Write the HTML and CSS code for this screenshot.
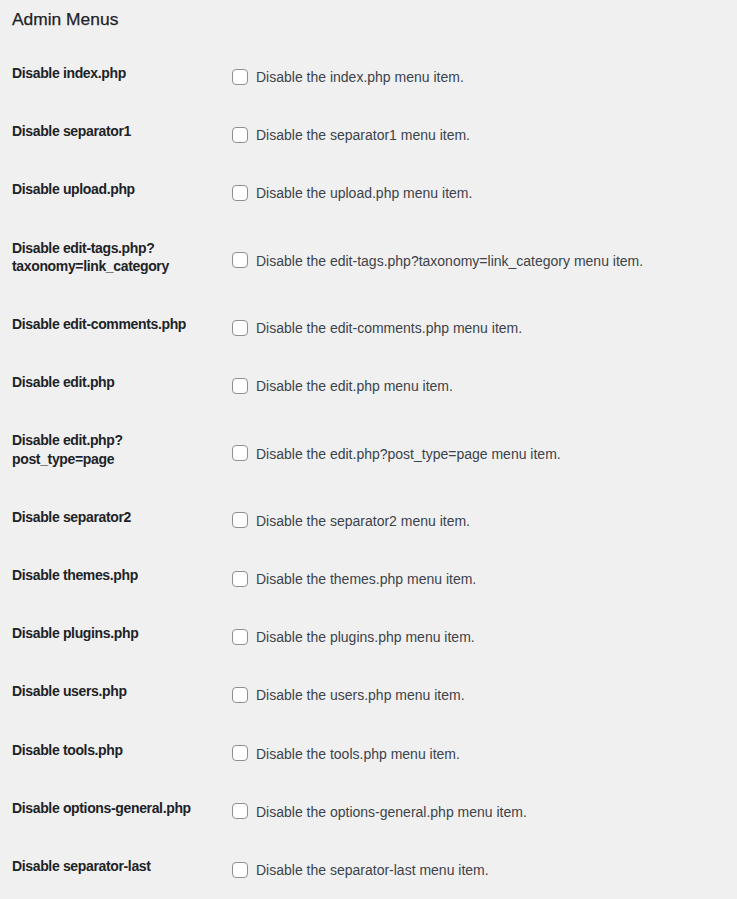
FILE: index.html
```html
<!DOCTYPE html>
<html lang="en">
<head>
<meta charset="utf-8">
<title>Admin Menus</title>
<link rel="stylesheet" href="styles.css">
</head>
<body>
<div class="wrap">
  <h2 class="section-title">Admin Menus</h2>
  <table class="form-table">
    <tbody>
      <tr><th>Disable index.php</th><td><label class="opt"><span class="cb"></span>Disable the index.php menu item.</label></td></tr>
      <tr><th>Disable separator1</th><td><label class="opt"><span class="cb"></span>Disable the separator1 menu item.</label></td></tr>
      <tr><th>Disable upload.php</th><td><label class="opt"><span class="cb"></span>Disable the upload.php menu item.</label></td></tr>
      <tr><th>Disable edit-tags.php?<br>taxonomy=link_category</th><td><label class="opt"><span class="cb"></span>Disable the edit-tags.php?taxonomy=link_category menu item.</label></td></tr>
      <tr><th>Disable edit-comments.php</th><td><label class="opt"><span class="cb"></span>Disable the edit-comments.php menu item.</label></td></tr>
      <tr><th>Disable edit.php</th><td><label class="opt"><span class="cb"></span>Disable the edit.php menu item.</label></td></tr>
      <tr><th>Disable edit.php?<br>post_type=page</th><td><label class="opt"><span class="cb"></span>Disable the edit.php?post_type=page menu item.</label></td></tr>
      <tr><th>Disable separator2</th><td><label class="opt"><span class="cb"></span>Disable the separator2 menu item.</label></td></tr>
      <tr><th>Disable themes.php</th><td><label class="opt"><span class="cb"></span>Disable the themes.php menu item.</label></td></tr>
      <tr><th>Disable plugins.php</th><td><label class="opt"><span class="cb"></span>Disable the plugins.php menu item.</label></td></tr>
      <tr><th>Disable users.php</th><td><label class="opt"><span class="cb"></span>Disable the users.php menu item.</label></td></tr>
      <tr><th>Disable tools.php</th><td><label class="opt"><span class="cb"></span>Disable the tools.php menu item.</label></td></tr>
      <tr><th>Disable options-general.php</th><td><label class="opt"><span class="cb"></span>Disable the options-general.php menu item.</label></td></tr>
      <tr><th>Disable separator-last</th><td><label class="opt"><span class="cb"></span>Disable the separator-last menu item.</label></td></tr>
    </tbody>
  </table>
</div>
</body>
</html>
```
FILE: styles.css
```css
html, body {
  margin: 0;
  padding: 0;
  background: #f0f0f1;
}
body {
  font-family: "Liberation Sans", Arial, sans-serif;
  font-size: 14px;
  color: #3c434a;
}
.wrap {
  padding: 0 12px;
}
.section-title {
  margin: 0;
  padding-top: 7px;
  height: 36px;
  box-sizing: border-box;
  font-size: 17.4px;
  line-height: 24px;
  font-weight: 400;
  color: #1d2327;
  -webkit-text-stroke: 0.25px #1d2327;
}
.form-table {
  border-collapse: collapse;
  border-spacing: 0;
  margin-top: 8px;
}
.form-table th {
  width: 200px;
  padding: 20px 10px 20px 0;
  text-align: left;
  vertical-align: top;
  font-weight: 700;
  font-size: 14px;
  line-height: 18.2px;
  letter-spacing: -0.35px;
  color: #1d2327;
}
.form-table td {
  padding: 24px 10px 16px 10px;
  vertical-align: middle;
  line-height: 18.2px;
}
.opt {
  display: flex;
  align-items: center;
  gap: 8px;
  white-space: nowrap;
}
.cb {
  width: 16px;
  height: 16px;
  box-sizing: border-box;
  border: 1px solid #8c8f94;
  border-radius: 4px;
  background: #fff;
  flex: none;
  margin-top: -1px;
}
```
